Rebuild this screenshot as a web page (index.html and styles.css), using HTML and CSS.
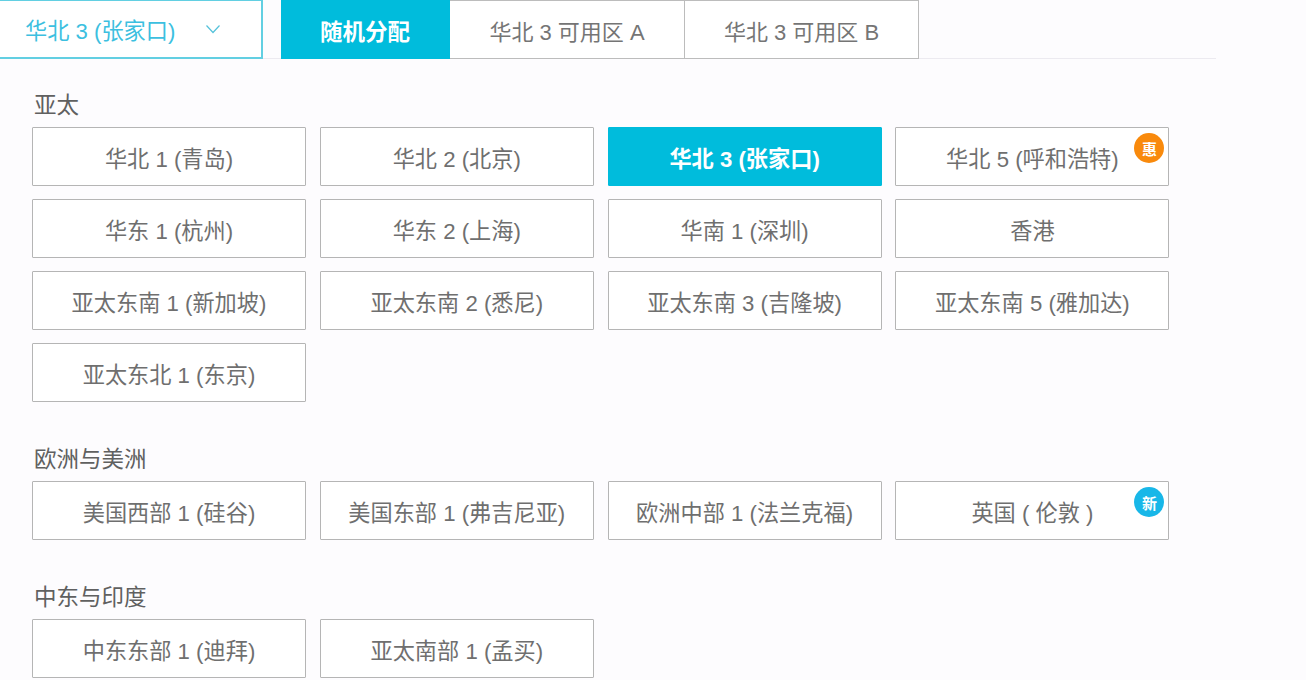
FILE: index.html
```html
<!DOCTYPE html>
<html lang="zh-CN">
<head>
<meta charset="utf-8">
<title>地域选择</title>
<link rel="stylesheet" href="styles.css">
</head>
<body>
<div class="page">
  <div class="top">
    <div class="select">
      <span class="select-text">华北 3 (张家口)</span>
      <svg class="chevron" width="16" height="10" viewBox="0 0 16 10"><path d="M1.5 1.5 L8 8.5 L14.5 1.5" fill="none" stroke="#55c2da" stroke-width="1.2"/></svg>
    </div>
    <div class="tabs">
      <div class="tab tab-active">随机分配</div>
      <div class="tab tab-a">华北 3 可用区 A</div>
      <div class="tab tab-b">华北 3 可用区 B</div>
    </div>
  </div>

  <section class="group group-first">
    <h2 class="label">亚太</h2>
    <div class="grid">
      <div class="cell">华北 1 (青岛)</div>
      <div class="cell">华北 2 (北京)</div>
      <div class="cell cell-active">华北 3 (张家口)</div>
      <div class="cell">华北 5 (呼和浩特)<span class="badge badge-orange">惠</span></div>
      <div class="cell">华东 1 (杭州)</div>
      <div class="cell">华东 2 (上海)</div>
      <div class="cell">华南 1 (深圳)</div>
      <div class="cell">香港</div>
      <div class="cell">亚太东南 1 (新加坡)</div>
      <div class="cell">亚太东南 2 (悉尼)</div>
      <div class="cell">亚太东南 3 (吉隆坡)</div>
      <div class="cell">亚太东南 5 (雅加达)</div>
      <div class="cell">亚太东北 1 (东京)</div>
    </div>
  </section>

  <section class="group group-next">
    <h2 class="label">欧洲与美洲</h2>
    <div class="grid">
      <div class="cell">美国西部 1 (硅谷)</div>
      <div class="cell">美国东部 1 (弗吉尼亚)</div>
      <div class="cell">欧洲中部 1 (法兰克福)</div>
      <div class="cell">英国 ( 伦敦 )<span class="badge badge-blue">新</span></div>
    </div>
  </section>

  <section class="group group-next">
    <h2 class="label">中东与印度</h2>
    <div class="grid">
      <div class="cell">中东东部 1 (迪拜)</div>
      <div class="cell">亚太南部 1 (孟买)</div>
    </div>
  </section>
</div>
</body>
</html>
```
FILE: styles.css
```css
* { box-sizing: border-box; }
html, body { margin: 0; height: 100%; }
body {
  background: #fdfcfe;
  color: #666;
  font-family: "Liberation Sans", "Noto Sans CJK SC", sans-serif;
  overflow: hidden;
}
.page { width: 1306px; height: 680px; overflow: hidden; }
.top { display: flex; width: 1216px; height: 59px; border-bottom: 1px solid #eceaf0; }
.select {
  display: flex;
  align-items: center;
  width: 265px;
  height: 60px;
  margin: -1px 0 0 -2px;
  padding: 0 0 0 25px;
  background: #fff;
  border: 2px solid #62cfe2;
  color: #3cbfe0;
  font-size: 22.2px;
}
.select-text { width: 180px; white-space: nowrap; }
.tabs { display: flex; margin-left: 18px; height: 59px; }
.tab {
  display: flex;
  align-items: center;
  justify-content: center;
  height: 59px;
  background: #fff;
  border: 1px solid #bcbcbc;
  border-left: 0;
  font-size: 22px;
  color: #757575;
  white-space: nowrap;
}
.tab-active { width: 169px; background: #00bcdc; border-color: #00bcdc; color: #fff; font-size: 22.5px; font-weight: 700; }
.tab-a { width: 235px; }
.tab-b { width: 234px; }
.group { width: 1170px; margin-left: 32px; }
.group-first { margin-top: 32px; }
.group-next { margin-top: 43px; }
.label {
  margin: 0 0 6px 2px;
  height: 30px;
  line-height: 30px;
  font-size: 22.5px;
  font-weight: 400;
  color: #606060;
}
.grid {
  display: grid;
  grid-template-columns: repeat(4, 274px);
  grid-auto-rows: 59px;
  column-gap: 13.8px;
  row-gap: 13px;
}
.cell {
  position: relative;
  display: flex;
  align-items: center;
  justify-content: center;
  background: #fff;
  border: 1px solid #b5b5b5;
  border-radius: 1px;
  font-size: 22.2px;
  color: #6f6f6f;
  white-space: nowrap;
}
.cell-active { background: #00bcdc; border-color: #00bcdc; color: #fff; font-weight: 700; }
.badge {
  position: absolute;
  top: 5px;
  right: 4px;
  width: 30px;
  height: 30px;
  border-radius: 50%;
  display: flex;
  align-items: center;
  justify-content: center;
  color: #fff;
  font-size: 15px;
  font-weight: 700;
}
.badge-orange { background: #f98a0c; }
.badge-blue { background: #18b7e8; }
```
